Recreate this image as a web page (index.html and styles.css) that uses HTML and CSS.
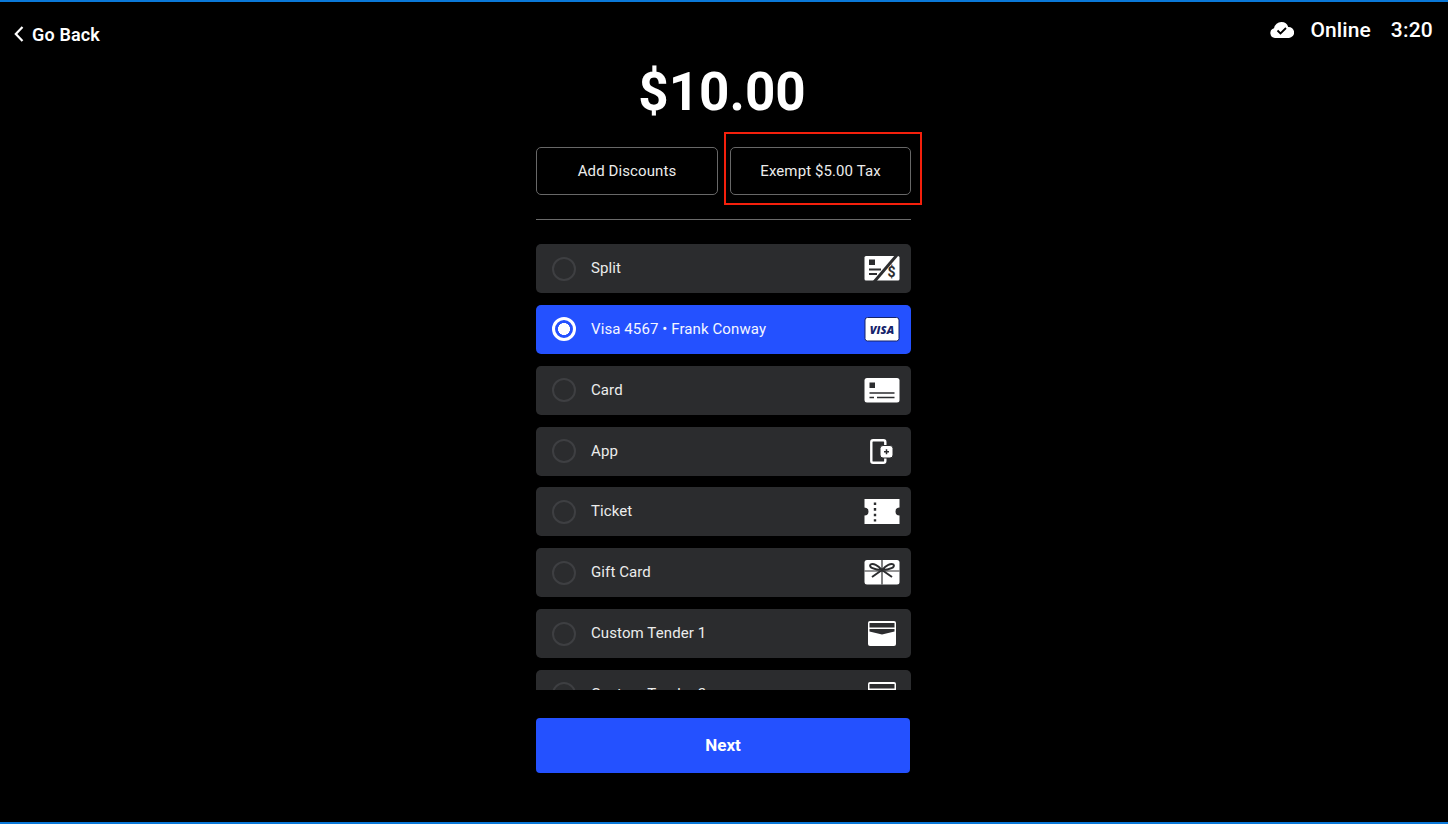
FILE: index.html
```html
<!DOCTYPE html>
<html lang="en">
<head>
<meta charset="utf-8">
<title>Payment</title>
<link rel="stylesheet" href="styles.css">
</head>
<body>
<div class="page">
  <header class="topbar">
    <a class="back">
      <svg class="back-icon" width="10" height="16" viewBox="0 0 10 16"><path d="M8.5 1 L1.8 8 L8.5 15" fill="none" stroke="#fff" stroke-width="2.2"/></svg>
      <span>Go Back</span>
    </a>
    <div class="status">
      <svg class="cloud" width="24" height="16" viewBox="0 0 24 16"><path d="M5 16a5 5 0 0 1-1-9.8A7.5 7.5 0 0 1 11.500 0a7 7 0 0 1 6.700 5A5.500 5.500 0 0 1 19 16z" fill="#fff"/><path d="M7.500 8.500l3 3 5.500-5.500" fill="none" stroke="#000" stroke-width="1.800"/></svg>
      <span class="online">Online</span>
      <span class="clock">3:20</span>
    </div>
  </header>
  <main class="column">
    <h1 class="amount">$10.00</h1>
    <div class="actions">
      <button class="ghost">Add Discounts</button>
      <div class="highlighted">
        <button class="ghost">Exempt $5.00 Tax</button>
        <span class="marker"></span>
      </div>
    </div>
    <hr class="rule">
    <ul class="tenders">
      <li class="tender">
        <span class="radio"></span><span class="label">Split</span>
        <span class="icon"><svg width="36" height="25" viewBox="0 0 36 25"><rect x="0.500" width="35" height="24.500" rx="1.500" fill="#fff"/><rect x="5" y="3.500" width="6" height="5.500" fill="#2c2d2f"/><path d="M5 13.500h12M5 18h8" stroke="#2c2d2f" stroke-width="2"/><path d="M33 -1L10 26" stroke="#2c2d2f" stroke-width="3"/><text x="27.500" y="21" class="dollar">$</text></svg></span>
      </li>
      <li class="tender active">
        <span class="radio"></span><span class="label">Visa 4567 • Frank Conway</span>
        <span class="icon"><svg width="36" height="25" viewBox="0 0 36 25"><rect x="1" y="0.500" width="34" height="23.500" rx="2.500" fill="#fff" stroke="#14236a"/><text x="18" y="16.500" class="visa">VISA</text></svg></span>
      </li>
      <li class="tender">
        <span class="radio"></span><span class="label">Card</span>
        <span class="icon"><svg width="36" height="25" viewBox="0 0 36 25"><rect x="0.500" y="0" width="35" height="24.500" rx="2.500" fill="#fff"/><rect x="5.500" y="4.500" width="5.500" height="5.500" fill="#2c2d2f"/><path d="M5.500 15h25M5.500 19.500h4.500M13 19.500h17.500" stroke="#2c2d2f" stroke-width="1.300"/></svg></span>
      </li>
      <li class="tender">
        <span class="radio"></span><span class="label">App</span>
        <span class="icon"><svg width="36" height="25" viewBox="0 0 36 25"><rect x="7.300" y="1.300" width="14" height="22.500" rx="1.800" fill="none" stroke="#fff" stroke-width="2.400"/><rect x="16" y="6.500" width="13" height="12.500" rx="3" fill="#fff" stroke="#2c2d2f" stroke-width="1"/><path d="M20 12.800h5M22.500 10.300v5" stroke="#2c2d2f" stroke-width="1.500"/></svg></span>
      </li>
      <li class="tender">
        <span class="radio"></span><span class="label">Ticket</span>
        <span class="icon"><svg width="36" height="25" viewBox="0 0 36 25"><path d="M0.500 0H35.500V8.500A4 4 0 0 0 35.500 16.500V25H0.500V16.500A4 4 0 0 0 0.500 8.500z" fill="#fff"/><path d="M11 3.500v19" stroke="#2c2d2f" stroke-width="2.400" stroke-dasharray="2.600 3"/></svg></span>
      </li>
      <li class="tender">
        <span class="radio"></span><span class="label">Gift Card</span>
        <span class="icon"><svg width="36" height="25" viewBox="0 0 36 25"><rect x="0.500" width="35" height="24.500" rx="2.500" fill="#fff"/><path d="M18 0v24.500M0.500 11h35" stroke="#2c2d2f" stroke-width="1.200"/><path d="M18 10C14 5 9 3 6.500 4.500 4.500 7 10 10 18 10C26 10 31.500 7 29.500 4.500 27 3 22 5 18 10zM18 10L8 17M18 10L28 17" fill="#fff" stroke="#2c2d2f" stroke-width="2"/></svg></span>
      </li>
      <li class="tender">
        <span class="radio"></span><span class="label">Custom Tender 1</span>
        <span class="icon"><svg width="36" height="25" viewBox="0 0 36 25"><rect x="4" y="0" width="28" height="25" rx="2" fill="#fff"/><rect x="5.500" y="2" width="25" height="4.500" fill="#2c2d2f"/><path d="M5.500 8H30.500V10.500L18 13.500L5.500 10.500z" fill="#2c2d2f"/></svg></span>
      </li>
      <li class="tender">
        <span class="radio"></span><span class="label">Custom Tender 2</span>
        <span class="icon"><svg width="36" height="25" viewBox="0 0 36 25"><rect x="4" y="0" width="28" height="25" rx="2" fill="#fff"/><rect x="5.500" y="2" width="25" height="4.500" fill="#2c2d2f"/><path d="M5.500 8H30.500V10.500L18 13.500L5.500 10.500z" fill="#2c2d2f"/></svg></span>
      </li>
    </ul>
    <button class="next">Next</button>
  </main>
</div>
</body>
</html>
```
FILE: styles.css
```css
* { box-sizing: border-box; }
html, body { margin: 0; height: 100%; background: #000; }
body { font-family: Roboto, "Liberation Sans", sans-serif; color: #fff; overflow: hidden; }

.page {
  position: relative;
  width: 1448px;
  height: 824px;
  border-top: 2px solid #0a78d8;
  border-bottom: 2px solid #0a78d8;
  overflow: hidden;
}

.topbar {
  display: flex;
  justify-content: space-between;
  align-items: flex-start;
  height: 62px;
  padding: 0 15px 0 14px;
}
.back {
  display: flex;
  align-items: center;
  gap: 8px;
  margin-top: 21px;
  height: 22px;
  font-size: 18px;
  font-weight: 600;
  letter-spacing: 0.15px;
}
.back-icon { flex: none; }
.status {
  display: flex;
  align-items: center;
  margin-top: 16px;
  height: 24px;
  font-size: 21px;
  font-weight: 500;
}
.cloud { margin-right: 16px; }
.online { margin-right: 20px; letter-spacing: 0.1px; }
.clock { letter-spacing: 0.2px; }

.column {
  width: 376px;
  margin: 0 auto;
  padding-right: 1px;
  display: flex;
  flex-direction: column;
}
.amount {
  margin: 0 0 0 -3px;
  height: 60px;
  line-height: 56px;
  font-size: 53px;
  font-weight: 700;
  text-align: center;
}
.actions {
  display: grid;
  grid-template-columns: 182px 181px;
  gap: 12px;
  margin-top: 23px;
}
.highlighted { position: relative; }
.ghost {
  display: block;
  width: 100%;
  height: 48px;
  background: #000;
  border: 1px solid #686868;
  border-radius: 5px;
  color: #ececec;
  font: 400 15px Roboto, "Liberation Sans", sans-serif;
  letter-spacing: 0.1px;
}
.marker {
  position: absolute;
  left: -6px;
  right: -11px;
  top: -15px;
  bottom: -10px;
  border: 2px solid #f5200c;
  pointer-events: none;
}
.rule {
  width: 100%;
  margin: 24px 0 0;
  border: 0;
  border-top: 1px solid #6a6a6a;
}
.tenders {
  list-style: none;
  margin: 24px 0 0;
  padding: 0;
  height: 446px;
  overflow: hidden;
  display: flex;
  flex-direction: column;
  gap: 11.85px;
}
.tender {
  flex: none;
  display: flex;
  align-items: center;
  height: 49px;
  padding: 0 11px 0 16px;
  background: #2b2c2e;
  border-radius: 5px;
  font-size: 15px;
  color: #ececec;
  letter-spacing: 0.1px;
}
.tender.active { background: #2451ff; color: #f4f6ff; }
.radio {
  flex: none;
  width: 24px;
  height: 24px;
  border: 2px solid #3e3f42;
  border-radius: 50%;
  margin-right: 15px;
}
.active .radio {
  border: 3px solid #fff;
  background: radial-gradient(circle, #fff 0 5.700px, transparent 6.200px);
}
.label { flex: 1; position: relative; top: -0.500px; }
.icon { flex: none; width: 36px; height: 25px; }
.icon svg { display: block; }
.dollar { font: 700 14px Roboto, sans-serif; fill: #2c2d2f; text-anchor: middle; }
.visa { font: italic 800 11px "Open Sans", Roboto, sans-serif; fill: #14236a; text-anchor: middle; }

.next {
  display: block;
  width: 374px;
  height: 55px;
  margin-top: 28px;
  padding-bottom: 2px;
  background: #2451ff;
  border: 0;
  border-radius: 4px;
  color: #fff;
  font: 700 17px Roboto, "Liberation Sans", sans-serif;
}
```
